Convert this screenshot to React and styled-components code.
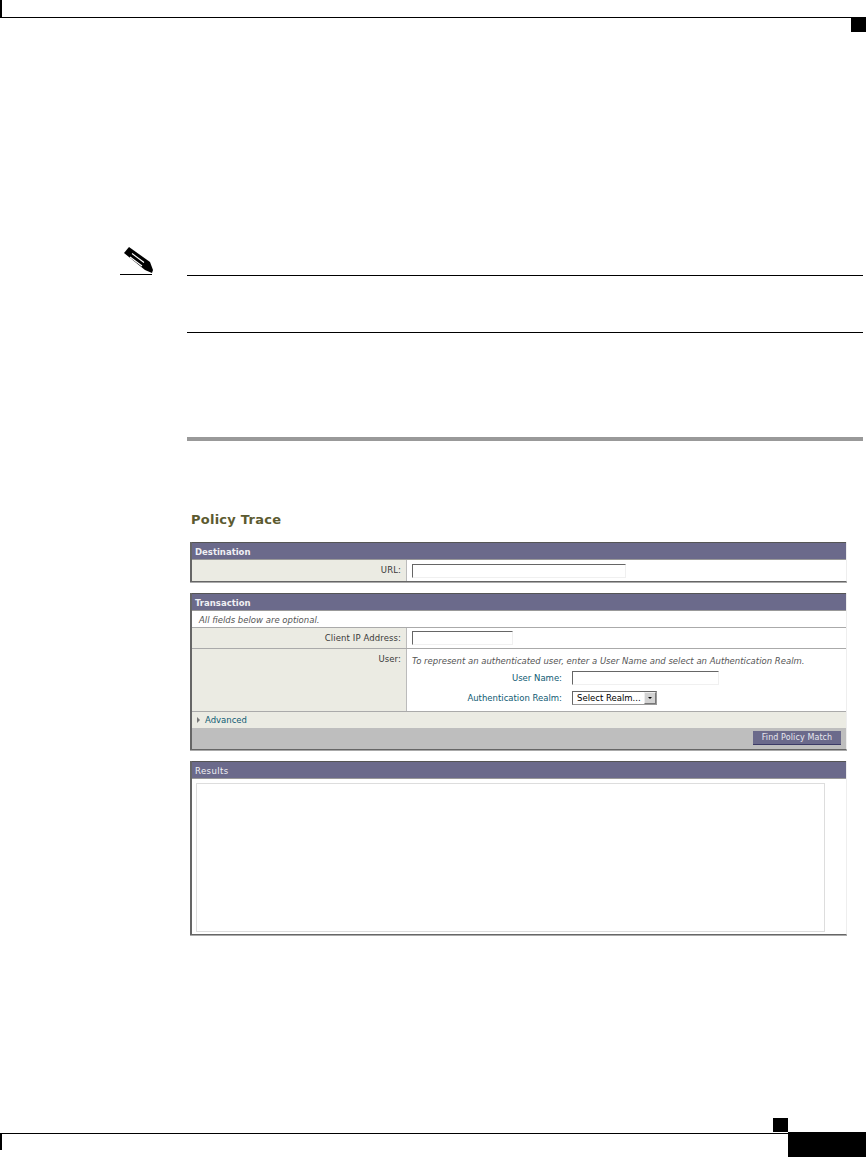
import React from 'react';
import styled, { createGlobalStyle } from 'styled-components';

const GlobalStyle = createGlobalStyle`
  html, body { margin: 0; padding: 0; background: #fff; }
  body { font-family: "DejaVu Sans", Verdana, sans-serif; font-size: 8.5px; color: #3a3a3a; }
`;

const Page = styled.div`
  width: 866px;
  height: 1157px;
  overflow: hidden;
  display: flex;
  flex-direction: column;
`;

const HeaderBar = styled.div`
  height: 17px;
  border-left: 2px solid #000;
  border-bottom: 1px solid #000;
`;

const HeaderTab = styled.div`
  width: 15px;
  height: 14px;
  background: #000;
  align-self: flex-end;
`;

const NoteRow = styled.div`
  display: flex;
  margin: 215px 3px 0 120px;
`;

const NoteIcon = styled.div`
  width: 67px;
  flex: none;
  svg { display: block; margin-left: 4px; }
  &::after {
    content: '';
    display: block;
    width: 32px;
    height: 1px;
    background: #000;
  }
`;

const NoteBox = styled.div`
  flex: 1;
  height: 56px;
  margin-top: 28px;
  border-top: 1px solid #000;
  border-bottom: 1px solid #000;
`;

const StepRule = styled.div`
  height: 4px;
  margin: 104px 3px 0 187px;
  background: #999;
`;

const Title = styled.h1`
  margin: 71px 0 14px 191px;
  font-size: 13px;
  line-height: 16px;
  letter-spacing: 0.25px;
  font-weight: 700;
  color: #5c5a30;
`;

const Panel = styled.section`
  width: 654px;
  margin: 0 0 11px 190px;
  border-left: 2px solid #666;
  border-right: 1px solid #eee;
  border-bottom: 1px solid #666;
  box-shadow: 0 1px 0 #aaa;
`;

const PanelHead = styled.h2`
  margin: 0;
  height: 16px;
  padding-left: 3px;
  background: #6b6a8b;
  border-top: 1px solid #555;
  border-bottom: 1px solid #999;
  font-size: 8.5px;
  line-height: 18px;
  font-weight: ${(p) => (p.$light ? 400 : 700)};
  letter-spacing: ${(p) => (p.$light ? '0.4px' : '0')};
  color: #f0f0f4;
`;

const Row = styled.div`
  display: flex;
  height: ${(p) => p.$h}px;
  border-bottom: ${(p) => (p.$line ? '1px solid #aaa' : 'none')};
`;

const LabelCell = styled.div`
  width: 215px;
  flex: none;
  box-sizing: border-box;
  padding: ${(p) => p.$top || 5}px 5px 0 0;
  background: #ebebe3;
  border-right: 1px solid #bbb;
  text-align: right;
  line-height: 10px;
  letter-spacing: 0.1px;
`;

const ValueCell = styled.div`
  flex: 1;
  padding: ${(p) => p.$top}px 0 0 5px;
`;

const NoteText = styled.div`
  padding: 4px 0 0 7px;
  font-style: italic;
  line-height: 10px;
  color: #555;
`;

const TextInput = styled.div`
  box-sizing: border-box;
  width: ${(p) => p.$w}px;
  height: 14px;
  background: #fff;
  border: 1px solid #f0f0f0;
  border-top-color: #666;
  border-left-color: #666;
`;

const UserHint = styled.div`
  margin-top: 1px;
  font-style: italic;
  line-height: 12px;
  color: #555;
`;

const FieldRow = styled.div`
  display: flex;
  align-items: center;
  margin-top: ${(p) => p.$gap}px;
`;

const FieldLabel = styled.div`
  width: 150px;
  margin-right: 10px;
  text-align: right;
  color: #0f5b73;
`;

const SelectBox = styled.div`
  box-sizing: border-box;
  width: 85px;
  height: 14px;
  display: flex;
  align-items: center;
  justify-content: space-between;
  padding-left: 4px;
  border: 1px solid #999;
  border-top-color: #666;
  border-left-color: #666;
  color: #000;
  line-height: 11px;
`;

const SelectArrow = styled.span`
  width: 12px;
  height: 12px;
  box-sizing: border-box;
  display: flex;
  align-items: center;
  justify-content: center;
  background: #d2d2d2;
  border: 1px solid #eee;
  border-right-color: #777;
  border-bottom-color: #777;
  &::after {
    content: '';
    border: 2px solid transparent;
    border-top: 2px solid #000;
    border-bottom: 0;
  }
`;

const AdvancedRow = styled.div`
  display: flex;
  align-items: center;
  gap: 5px;
  height: 16px;
  padding-left: 5px;
  background: #ebebe3;
  color: #0f5b73;
`;

const Caret = styled.span`
  width: 0;
  height: 0;
  border-left: 3px solid #777;
  border-top: 3px solid transparent;
  border-bottom: 3px solid transparent;
`;

const ActionBar = styled.div`
  height: 21px;
  box-sizing: border-box;
  padding: 3px 5px 0 0;
  display: flex;
  justify-content: flex-end;
  align-items: flex-start;
  background: #bebebe;
`;

const ActionButton = styled.button`
  width: 88px;
  height: 14px;
  padding: 0;
  border: 0;
  border-bottom: 1px solid #3c3b66;
  background: #6b6a8b;
  color: #e8e8ee;
  font: 8px "DejaVu Sans", sans-serif;
  letter-spacing: 0.1px;
`;

const ResultsBody = styled.div`
  padding: 4px 21px 2px 4px;
`;

const ResultsBox = styled.div`
  height: 147px;
  border: 1px solid #ddd;
`;

const Footer = styled.div`
  margin-top: auto;
  position: relative;
  height: 25px;
  display: flex;
  align-items: flex-start;
`;

const FooterLine = styled.div`
  flex: 1;
  height: 16px;
  margin-top: 1px;
  border-top: 1px solid #000;
  border-left: 2px solid #000;
`;

const PageTab = styled.div`
  position: absolute;
  right: 78px;
  bottom: 25px;
  width: 15px;
  height: 14px;
  background: #000;
`;

const PageNumber = styled.div`
  width: 78px;
  height: 25px;
  background: #000;
`;

const Pencil = () => (
  <svg width="30" height="27" viewBox="0 0 30 27">
    <path d="M0 6 L5 0 L26 15 L29 23 L28 26 L21 23 Z" fill="#000" />
    <path d="M8 6.5 L20 15.5" stroke="#fff" strokeWidth="1.1" fill="none" />
    <path d="M6 10 L18 19" stroke="#fff" strokeWidth="1.1" fill="none" />
  </svg>
);

export default function App() {
  return (
    <Page>
      <GlobalStyle />
      <HeaderBar />
      <HeaderTab />

      <NoteRow>
        <NoteIcon><Pencil /></NoteIcon>
        <NoteBox />
      </NoteRow>
      <StepRule />

      <Title>Policy Trace</Title>

      <Panel>
        <PanelHead>Destination</PanelHead>
        <Row $h={21}>
          <LabelCell>URL:</LabelCell>
          <ValueCell $top={4}><TextInput $w={214} /></ValueCell>
        </Row>
      </Panel>

      <Panel>
        <PanelHead>Transaction</PanelHead>
        <Row $h={16} $line><NoteText>All fields below are optional.</NoteText></Row>
        <Row $h={20} $line>
          <LabelCell>Client IP Address:</LabelCell>
          <ValueCell $top={3}><TextInput $w={101} /></ValueCell>
        </Row>
        <Row $h={62} $line>
          <LabelCell>User:</LabelCell>
          <ValueCell $top={5}>
            <UserHint>To represent an authenticated user, enter a User Name and select an Authentication Realm.</UserHint>
            <FieldRow $gap={4}>
              <FieldLabel>User Name:</FieldLabel>
              <TextInput $w={147} />
            </FieldRow>
            <FieldRow $gap={6}>
              <FieldLabel>Authentication Realm:</FieldLabel>
              <SelectBox>Select Realm...<SelectArrow /></SelectBox>
            </FieldRow>
          </ValueCell>
        </Row>
        <AdvancedRow><Caret />Advanced</AdvancedRow>
        <ActionBar><ActionButton>Find Policy Match</ActionButton></ActionBar>
      </Panel>

      <Panel>
        <PanelHead $light>Results</PanelHead>
        <ResultsBody><ResultsBox /></ResultsBody>
      </Panel>

      <Footer>
        <FooterLine />
        <PageTab />
        <PageNumber />
      </Footer>
    </Page>
  );
}
